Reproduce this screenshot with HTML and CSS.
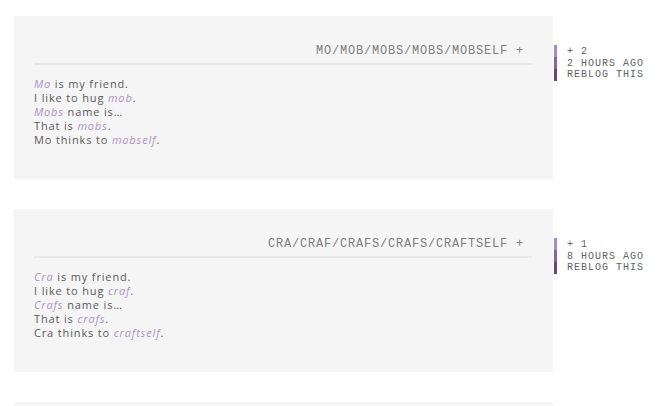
FILE: index.html
```html
<!DOCTYPE html>
<html>
<head>
<meta charset="utf-8">
<link rel="stylesheet" href="styles.css">
</head>
<body>
<div class="posts">
  <div class="post">
    <div class="box">
      <div class="head">MO/MOB/MOBS/MOBS/MOBSELF +</div>
      <div class="text">
        <div><em>Mo</em> is my friend.</div>
        <div>I like to hug <em>mob</em>.</div>
        <div><em>Mobs</em> name is…</div>
        <div>That is <em>mobs</em>.</div>
        <div>Mo thinks to <em>mobself</em>.</div>
      </div>
    </div>
    <div class="side">
      <div class="bar"><span class="b1"></span><span class="b2"></span><span class="b3"></span></div>
      <div class="meta">
        <div>+ 2</div>
        <div>2 HOURS AGO</div>
        <div>REBLOG THIS</div>
      </div>
    </div>
  </div>
  <div class="post">
    <div class="box">
      <div class="head">CRA/CRAF/CRAFS/CRAFS/CRAFTSELF +</div>
      <div class="text">
        <div><em>Cra</em> is my friend.</div>
        <div>I like to hug <em>craf</em>.</div>
        <div><em>Crafs</em> name is…</div>
        <div>That is <em>crafs</em>.</div>
        <div>Cra thinks to <em>craftself</em>.</div>
      </div>
    </div>
    <div class="side">
      <div class="bar"><span class="b1"></span><span class="b2"></span><span class="b3"></span></div>
      <div class="meta">
        <div>+ 1</div>
        <div>8 HOURS AGO</div>
        <div>REBLOG THIS</div>
      </div>
    </div>
  </div>
  <div class="post">
    <div class="box box-short"></div>
  </div>
</div>
</body>
</html>
```
FILE: styles.css
```css
html, body {
  margin: 0;
  padding: 0;
  background: #ffffff;
  overflow: hidden;
  height: 406px;
}
.posts {
  padding: 16px 0 0 14px;
  display: flex;
  flex-direction: column;
  gap: 30px;
}
.post {
  display: flex;
  align-items: flex-start;
}
.box {
  width: 539px;
  height: 163px;
  box-sizing: border-box;
  background: #f5f5f5;
  padding: 27px 21px 0 20px;
}
.box-short {
  height: 4px;
}
.head {
  font-family: "Liberation Mono", "Courier New", monospace;
  font-size: 12px;
  letter-spacing: 0.8px;
  color: #7d7d7d;
  text-align: right;
  padding-right: 8px;
  line-height: 16px;
  padding-bottom: 4px;
  border-bottom: 2px solid #e8e8e8;
}
.text {
  margin-top: 12px;
  font-family: "Open Sans", sans-serif;
  font-size: 11px;
  line-height: 14px;
  letter-spacing: 0.85px;
  color: #5a5a5a;
}
.text em {
  color: #ad92c6;
  font-style: italic;
}
.side {
  display: flex;
  margin-top: 29px;
  margin-left: 1px;
  gap: 10px;
}
.bar {
  display: flex;
  flex-direction: column;
  width: 3px;
}
.bar span {
  display: block;
  height: 12px;
}
.b1 { background: #a78bbf; }
.b2 { background: #85669a; }
.b3 { background: #644a72; }
.meta {
  font-family: "Liberation Mono", "Courier New", monospace;
  font-size: 10px;
  letter-spacing: 1px;
  line-height: 11.5px;
  color: #626262;
  padding-top: 1px;
}
```
